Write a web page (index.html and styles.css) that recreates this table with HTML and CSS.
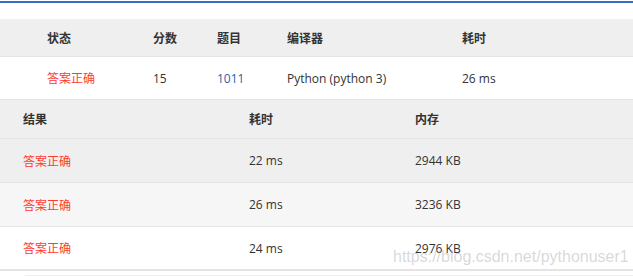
FILE: index.html
```html
<!DOCTYPE html>
<html lang="zh">
<head>
<meta charset="utf-8">
<link rel="stylesheet" href="styles.css">
</head>
<body>
<div class="topbar"></div>
<div class="summary">
  <div class="srow shead">
    <div>状态</div><div>分数</div><div>题目</div><div>编译器</div><div>耗时</div>
  </div>
  <div class="srow sbody">
    <div class="ok">答案正确</div><div>15</div><div class="link">1011</div><div>Python (python 3)</div><div>26 ms</div>
  </div>
</div>
<div class="cases">
  <div class="crow chead"><div>结果</div><div>耗时</div><div>内存</div></div>
  <div class="crow c1"><div class="ok">答案正确</div><div>22 ms</div><div>2944 KB</div></div>
  <div class="crow c2"><div class="ok">答案正确</div><div>26 ms</div><div>3236 KB</div></div>
  <div class="crow c3"><div class="ok">答案正确</div><div>24 ms</div><div>2976 KB</div></div>
</div>
<div class="after"></div>
<div class="watermark">https://blog.csdn.net/pythonuser1</div>
</body>
</html>
```
FILE: styles.css
```css
html, body {
  margin: 0;
  padding: 0;
  background: #fff;
}
body {
  position: relative;
  width: 633px;
  height: 277px;
  overflow: hidden;
  font-family: "Open Sans", "Noto Sans CJK SC", sans-serif;
  font-size: 12px;
  color: #333;
  padding-top: 1px;
  box-sizing: border-box;
}
.topbar {
  height: 2px;
  background: #3b6cc4;
}
.summary {
  margin-top: 16px;
}
.srow {
  display: grid;
  grid-template-columns: 106px 64px 70px 175px 1fr;
  padding-left: 47px;
  align-items: center;
  border-bottom: 1px solid #e4e4e4;
}
.shead {
  height: 37px;
  background: #efefef;
  font-weight: 700;
}
.sbody {
  height: 42px;
  background: #fff;
}
.crow {
  display: grid;
  grid-template-columns: 226px 166px 1fr;
  padding-left: 23px;
  align-items: center;
  border-bottom: 1px solid #e4e4e4;
}
.chead {
  height: 38px;
  background: #efefef;
  font-weight: 700;
}
.c1 {
  height: 43px;
  background: #efefef;
}
.c2 {
  height: 43px;
  background: #f6f6f6;
}
.c3 {
  height: 42px;
  background: #fff;
  border-bottom: 2px solid #e4e4e4;
}
.after {
  margin: 4px 0 0 25px;
  height: 1px;
  background: #f0f0f0;
}
.ok {
  color: #ff3b30;
}
.link {
  color: #2c5fae;
}
.watermark {
  position: absolute;
  left: 393px;
  top: 248px;
  font-family: "Liberation Sans", Arial, sans-serif;
  font-size: 16px;
  color: rgba(170, 170, 170, 0.45);
  white-space: nowrap;
  pointer-events: none;
}
```
